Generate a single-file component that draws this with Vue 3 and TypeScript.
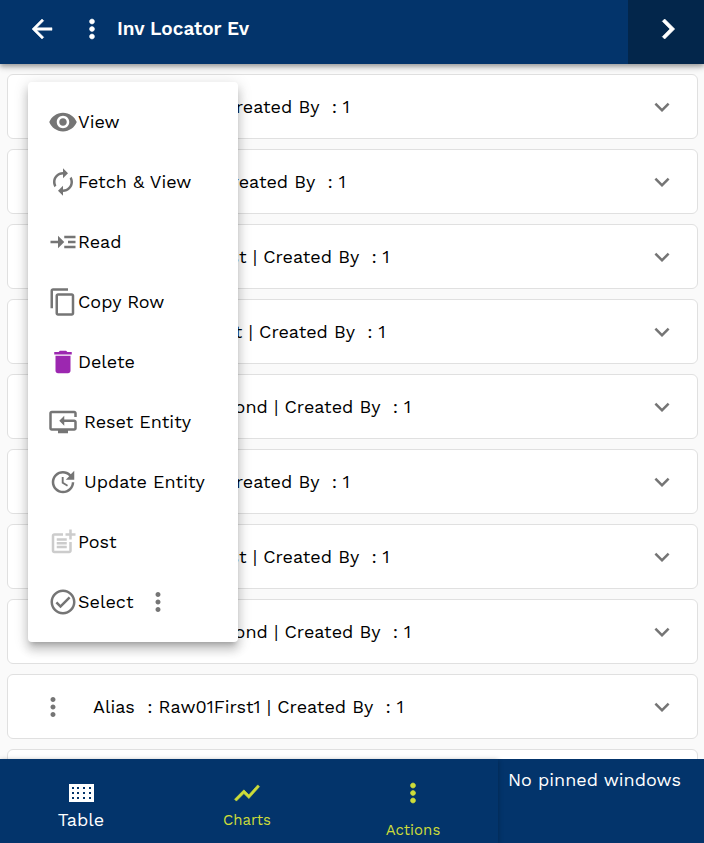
<script setup lang="ts">
import { ref } from 'vue'

interface MenuItem {
  label: string
  icon: string
  tone?: string
  spaced?: boolean
  more?: boolean
}

const dots =
  'M12 8c1.1 0 2-.9 2-2s-.9-2-2-2-2 .9-2 2 .9 2 2 2zm0 2c-1.1 0-2 .9-2 2s.9 2 2 2 2-.9 2-2-.9-2-2-2zm0 6c-1.1 0-2 .9-2 2s.9 2 2 2 2-.9 2-2-.9-2-2-2z'

const menu: MenuItem[] = [
  {
    label: 'View',
    icon: 'M12 4.5C7 4.5 2.73 7.61 1 12c1.73 4.39 6 7.5 11 7.5s9.27-3.11 11-7.5c-1.73-4.39-6-7.5-11-7.5zM12 17c-2.76 0-5-2.24-5-5s2.24-5 5-5 5 2.24 5 5-2.24 5-5 5zm0-8c-1.66 0-3 1.34-3 3s1.34 3 3 3 3-1.34 3-3-1.34-3-3-3z',
  },
  {
    label: 'Fetch & View',
    icon: 'M12 6v3l4-4-4-4v3c-4.42 0-8 3.58-8 8 0 1.57.46 3.03 1.24 4.26L6.7 14.8c-.45-.83-.7-1.79-.7-2.8 0-3.31 2.69-6 6-6zm6.76 1.74L17.3 9.2c.44.84.7 1.79.7 2.8 0 3.31-2.69 6-6 6v-3l-4 4 4 4v-3c4.42 0 8-3.58 8-8 0-1.57-.46-3.03-1.24-4.26z',
  },
  { label: 'Read', icon: 'M22 7h-9v2h9V7zm0 8h-9v2h9v-2zm0-4h-6v2h6v-2zm-9 1L8 7v4H2v2h6v4l5-5z' },
  {
    label: 'Copy Row',
    icon: 'M16 1H4c-1.1 0-2 .9-2 2v14h2V3h12V1zm3 4H8c-1.1 0-2 .9-2 2v14c0 1.1.9 2 2 2h11c1.1 0 2-.9 2-2V7c0-1.1-.9-2-2-2zm0 16H8V7h11v14z',
  },
  {
    label: 'Delete',
    tone: 'purple',
    icon: 'M6 19c0 1.1.9 2 2 2h8c1.1 0 2-.9 2-2V7H6v12zM19 4h-3.5l-1-1h-5l-1 1H5v2h14V4z',
  },
  {
    label: 'Reset Entity',
    spaced: true,
    icon: 'M23 8h-2V5H3v12h18v-5h-8v3l-4-4 4-4v3h8c1.1 0 2 .9 2 2v5c0 1.1-.9 2-2 2h-5v2H8v-2H3c-1.1 0-2-.9-2-2V5c0-1.1.9-2 2-2h18c1.1 0 2 .9 2 2v3z',
  },
  {
    label: 'Update Entity',
    spaced: true,
    icon: 'M21 10.12h-6.78l2.74-2.82c-2.73-2.7-7.15-2.8-9.88-.1-2.73 2.71-2.73 7.08 0 9.79s7.15 2.71 9.88 0C18.32 15.65 19 14.08 19 12.1h2c0 1.98-.88 4.55-2.64 6.29-3.51 3.48-9.21 3.48-12.72 0-3.5-3.47-3.53-9.11-.02-12.58s9.14-3.47 12.65 0L21 3v7.12zM12.5 8v4.25l3.5 2.08-.72 1.21L11 13V8h1.5z',
  },
  {
    label: 'Post',
    tone: 'faded',
    icon: 'M17 19H5V7h7V5H5c-1.1 0-2 .9-2 2v12c0 1.1.9 2 2 2h12c1.1 0 2-.9 2-2v-7h-2v7zM19 2h-2v3h-3v2h3v3h2V7h3V5h-3V2zM7 9h8v2H7zM7 12h8v2H7zM7 15h8v2H7z',
  },
  {
    label: 'Select',
    more: true,
    icon: 'M16.59 7.58 10 14.17l-2.59-2.58L6 13l4 4 8-8zM12 2C6.48 2 2 6.48 2 12s4.48 10 10 10 10-4.48 10-10S17.52 2 12 2zm0 18c-4.42 0-8-3.58-8-8s3.58-8 8-8 8 3.58 8 8-3.58 8-8 8z',
  },
]

const rows = ref([
  { alias: 'Raw0', by: 1 },
  { alias: 'Raw1', by: 1 },
  { alias: 'Raw0First', by: 1 },
  { alias: 'Raw1First', by: 1 },
  { alias: 'Raw1Second', by: 1 },
  { alias: 'Raw0', by: 1 },
  { alias: 'Raw0First', by: 1 },
  { alias: 'Raw1Second', by: 1 },
  { alias: 'Raw01First1', by: 1 },
  { alias: 'Raw01First2', by: 1 },
])
</script>

<template>
  <div class="page">
    <header class="bar">
      <button class="icon-btn" aria-label="Back">
        <svg viewBox="0 0 24 24"><path d="M20 11H7.83l5.59-5.59L12 4l-8 8 8 8 1.41-1.41L7.83 13H20v-2z" stroke="currentColor" stroke-width="0.4" /></svg>
      </button>
      <button class="icon-btn dots" aria-label="More">
        <svg viewBox="0 0 24 24"><path :d="dots" stroke="currentColor" stroke-width="0.4" /></svg>
      </button>
      <h1>Inv Locator Ev</h1>
      <button class="next" aria-label="Next">
        <svg viewBox="0 0 24 24"><path d="M10 6 8.59 7.41 13.17 12l-4.58 4.59L10 18l6-6z" stroke="currentColor" stroke-width="0.4" /></svg>
      </button>
    </header>

    <main class="content">
      <ul class="rows">
        <li v-for="(row, i) in rows" :key="i" class="row">
          <button class="icon-btn" aria-label="Row actions">
            <svg viewBox="0 0 24 24"><path :d="dots" /></svg>
          </button>
          <span class="summary">Alias&nbsp; : {{ row.alias }} | Created By&nbsp; : {{ row.by }}</span>
          <button class="icon-btn" aria-label="Expand">
            <svg viewBox="0 0 24 24"><path d="M16.59 8.59 12 13.17 7.41 8.59 6 10l6 6 6-6z" /></svg>
          </button>
        </li>
      </ul>

      <div class="menu" role="menu">
        <div v-for="item in menu" :key="item.label" class="entry">
          <button class="action" :class="[item.tone, { spaced: item.spaced }]" role="menuitem">
            <svg viewBox="0 0 24 24"><path :d="item.icon" /></svg>
            <span>{{ item.label }}</span>
          </button>
          <button v-if="item.more" class="icon-btn" aria-label="Select options">
            <svg viewBox="0 0 24 24"><path :d="dots" /></svg>
          </button>
        </div>
      </div>
    </main>

    <footer class="footer">
      <nav class="tabs">
        <button class="tab current">
          <svg viewBox="0 0 30 30">
            <path
              fill-rule="evenodd"
              d="M3 6h25v18H3zM6 9v2h2V9zM11 9v2h2V9zM17 9v2h2V9zM23 9v2h2V9zM6 14v2h2v-2zM11 14v2h2v-2zM17 14v2h2v-2zM23 14v2h2v-2zM6 19v2h2v-2zM11 19v2h2v-2zM17 19v2h2v-2zM23 19v2h2v-2z"
            />
          </svg>
          <span>Table</span>
        </button>
        <button class="tab">
          <svg viewBox="0 0 24 24"><path d="m3.5 18.49 6-6.01 4 4L22 6.92l-1.41-1.41-7.09 7.97-4-4L2 16.99z" stroke="currentColor" stroke-width="0.5" /></svg>
          <span>Charts</span>
        </button>
        <button class="tab tall">
          <svg viewBox="0 0 24 24"><path :d="dots" stroke="currentColor" stroke-width="0.5" /></svg>
          <span>Actions</span>
        </button>
      </nav>
      <aside class="pinned">No pinned windows</aside>
    </footer>
  </div>
</template>

<style>
body {
  margin: 0;
  background: #fafafa;
}
</style>

<style scoped>
.page {
  display: flex;
  flex-direction: column;
  height: 100vh;
  overflow: hidden;
  font-family: 'Work Sans', Inter, 'Liberation Sans', sans-serif;
  font-size: 18px;
  line-height: 24px;
  color: #000;
}
button {
  display: flex;
  align-items: center;
  margin: 0;
  padding: 0;
  border: 0;
  background: none;
  color: inherit;
  font: inherit;
  cursor: pointer;
}
svg {
  display: block;
  flex: none;
  width: 30px;
  height: 30px;
  fill: currentColor;
}
.icon-btn {
  flex: none;
  color: #757575;
}
.bar {
  position: relative;
  z-index: 2;
  display: flex;
  flex: none;
  align-items: center;
  box-sizing: border-box;
  height: 64px;
  padding-left: 27px;
  background: #03346b;
  color: #fff;
  box-shadow: 0 2px 4px rgba(0, 0, 0, 0.2), 0 4px 5px rgba(0, 0, 0, 0.14), 0 1px 10px rgba(0, 0, 0, 0.12);
}
.bar .icon-btn {
  padding-bottom: 6px;
  color: #fff;
}
.dots {
  margin-left: 20px;
}
h1 {
  flex: 1;
  margin: 0;
  padding: 0 0 6px 10px;
  font-size: 19px;
  line-height: 24px;
  font-weight: 600;
}
.next {
  box-sizing: border-box;
  justify-content: center;
  align-self: stretch;
  width: 76px;
  padding: 0 0 6px 4px;
  background: #03264b;
}
.next svg {
  width: 40px;
  height: 40px;
}
.content {
  position: relative;
  flex: 1;
  min-height: 0;
  overflow: hidden;
  padding: 10px 6px 0 7px;
}
.rows {
  display: flex;
  flex-direction: column;
  gap: 10px;
  margin: 0;
  padding: 0;
  list-style: none;
}
.row {
  display: flex;
  align-items: center;
  box-sizing: border-box;
  min-height: 65px;
  padding: 0 20px 0 30px;
  border: 1px solid #e0e0e0;
  border-radius: 6px;
  background: #fff;
}
.summary {
  flex: 1;
  padding-left: 25px;
}
.menu {
  position: absolute;
  top: 18px;
  left: 28px;
  box-sizing: border-box;
  width: 210px;
  padding: 10px 20px;
  border-radius: 4px;
  background: #fff;
  box-shadow: 0 5px 5px -3px rgba(0, 0, 0, 0.2), 0 8px 10px 1px rgba(0, 0, 0, 0.14), 0 3px 14px 2px rgba(0, 0, 0, 0.12);
}
.entry {
  display: flex;
  align-items: center;
  gap: 10px;
  height: 60px;
}
.action svg {
  color: #757575;
}
.action.purple svg {
  color: #9c27b0;
}
.action.faded svg {
  color: #ccc;
}
.action.spaced {
  gap: 6px;
}
.footer {
  position: relative;
  z-index: 2;
  display: flex;
  flex: none;
  height: 84px;
  background: #03346b;
  color: #fff;
}
.tabs {
  display: grid;
  grid-template-columns: repeat(3, 1fr);
  flex: 1;
  box-shadow: 0 1px 5px rgba(0, 0, 0, 0.3);
}
.tab {
  flex-direction: column;
  padding: 19px 4px 0 0;
  color: #cddc39;
  font-size: 15px;
}
.tab.current {
  color: #fff;
  font-size: 18px;
}
.tab.tall {
  gap: 10px;
}
.pinned {
  box-sizing: border-box;
  width: 206px;
  padding: 9px 10px;
}
</style>
